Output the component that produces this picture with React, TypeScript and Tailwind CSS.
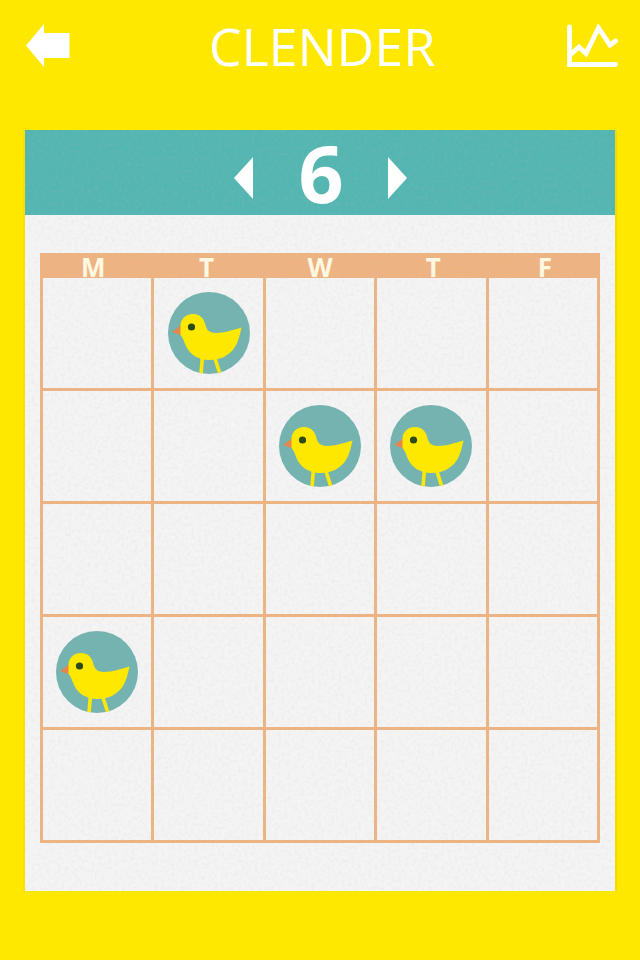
import React from "react";

const days = ["M", "T", "W", "T", "F"];
const dayPadding = ["pr-2", "pr-1", "", "pl-1", "pl-1"];
const visits = [[1], [2, 3], [], [0], []];

function Bird() {
  return (
    <svg viewBox="0 0 82 82" className="relative z-10 mx-auto block size-[82px]" role="img" aria-label="Stamp">
      <defs>
        <clipPath id="disc">
          <circle cx="41" cy="41" r="41" />
        </clipPath>
      </defs>
      <circle cx="41" cy="41" r="41" fill="#75b3b0" />
      <g clipPath="url(#disc)">
        <path d="M4 40L13.500 33V43.500Z" fill="#e38650" />
        <path d="M34.500 64L33 82M46.500 65L52 82" stroke="#ffe800" strokeWidth="3.600" fill="none" />
        <path
          d="M12.500 43V34C12.500 27 17.500 22 25 22C31.500 22 35.500 26 37 31.500C38.500 37.500 40.500 41 48 41C56 41 65 38 73.500 35.500C72 43 70 50 67 55C61 64 52 68 41 68C30 67.500 23 63 19 56C16.500 51.500 15.500 46 12.500 43Z"
          fill="#ffe800"
        />
        <circle cx="23.500" cy="35" r="3.600" fill="#2b4a16" />
      </g>
    </svg>
  );
}

function PaperGrain() {
  return (
    <svg className="pointer-events-none absolute inset-0 size-full" aria-hidden="true">
      <filter id="grain" x="0" y="0" width="100%" height="100%">
        <feTurbulence type="fractalNoise" baseFrequency="0.3" numOctaves="2" seed="4" />
        <feColorMatrix values="0 0 0 0 0.5  0 0 0 0 0.5  0 0 0 0 0.5  0.3 0 0 0 -0.125" />
      </filter>
      <rect width="100%" height="100%" filter="url(#grain)" />
    </svg>
  );
}

export default function App() {
  return (
    <div className="min-h-screen bg-[#ffe800] pb-[69px] font-['Open_Sans','Noto_Sans',sans-serif] text-white">
      <header className="flex h-[130px] items-start justify-between pt-6 pr-[22px] pl-[26px]">
        <button type="button" aria-label="Back" className="w-[51px]">
          <svg viewBox="0 0 44 43" className="block h-[43px] w-[44px]" fill="white">
            <path d="M0 21.500L18 0V9H43.500V34H18V43Z" />
          </svg>
        </button>
        <h1 className="text-[52px] leading-[44px] font-normal">CLENDER</h1>
        <button type="button" aria-label="Statistics" className="w-[51px]">
          <svg viewBox="0 0 51 44" className="block h-[44px] w-[51px]" fill="none" stroke="white" strokeWidth="4.800">
            <path d="M2.500 3V40.500H48.500" strokeLinecap="round" />
            <path d="M3 31L12 23L19 29.500L31.500 4L43 21L48.500 17" strokeLinecap="round" />
          </svg>
        </button>
      </header>

      <main className="relative mx-[25px] bg-[#f4f4f4] pb-12 shadow-[2px_0_0_#f2dc00,-2px_0_0_#f8e100]">
        <div className="flex h-[85px] items-center justify-center gap-[46px] bg-[#53b6b1]">
          <button type="button" aria-label="Previous month" className="relative z-10 pt-[10px]">
            <svg viewBox="0 0 19 42" className="block h-[42px] w-[19px]" fill="white">
              <path d="M0 21L19 0V42Z" />
            </svg>
          </button>
          <h2 className="relative z-10 w-[43px] text-center text-[79px] leading-[82px] font-bold">6</h2>
          <button type="button" aria-label="Next month" className="relative z-10 pt-[10px]">
            <svg viewBox="0 0 19 42" className="block h-[42px] w-[19px]" fill="white">
              <path d="M19 21L0 0V42Z" />
            </svg>
          </button>
        </div>

        <div className="px-[15px] pt-[38px]">
          <table className="w-full table-fixed border-separate border-spacing-0 border-l-[3px] border-[#eeb381]">
            <thead>
              <tr className="bg-[#eeb381]">
                {days.map((day, i) => (
                  <th
                    key={i}
                    scope="col"
                    className={`h-[25px] border-r-[3px] border-[#eeb381] py-0 text-[26px] leading-[25px] font-bold text-[#fff8e1] ${dayPadding[i]}`}
                  >
                    <span className="relative z-10 block pt-1 leading-[21px]">{day}</span>
                  </th>
                ))}
              </tr>
            </thead>
            <tbody>
              {visits.map((week, row) => (
                <tr key={row}>
                  {days.map((_, col) => (
                    <td key={col} className="h-[113px] border-r-[3px] border-b-[3px] border-[#eeb381] p-0 align-middle">
                      {week.includes(col) && <Bird />}
                    </td>
                  ))}
                </tr>
              ))}
            </tbody>
          </table>
        </div>
        <PaperGrain />
      </main>
    </div>
  );
}
